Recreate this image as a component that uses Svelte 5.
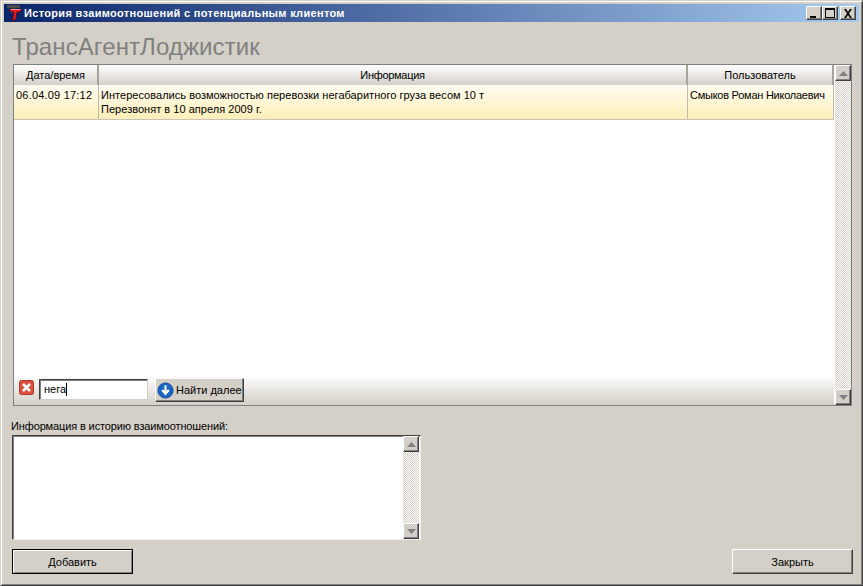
<script lang="ts">
  const columns = [
    { title: 'Дата/время', cls: 'col-date' },
    { title: 'Информация', cls: 'col-info' },
    { title: 'Пользователь', cls: 'col-user' }
  ];
</script>

{#snippet scrollbar()}
  <div class="scrollbar">
    <div class="sb-btn"><svg width="9" height="5" viewBox="0 0 9 5"><path d="M4.5 0 9 5H0z" fill="#808080" /></svg></div>
    <div class="sb-track"></div>
    <div class="sb-btn"><svg width="9" height="5" viewBox="0 0 9 5"><path d="M0 0h9L4.5 5z" fill="#808080" /></svg></div>
  </div>
{/snippet}

<div class="window">
  <div class="titlebar">
    <svg class="app-icon" width="16" height="18" viewBox="0 0 16 18">
      <path d="M0 1h13v3H8L7 9H4l1-5H0z" fill="#4a4a4a" />
      <path d="M3 5h11l-.5 3H10l-1.500 8h-3L7 8H3z" fill="#f01820" stroke="#300" stroke-width="0.500" />
      <path d="M3.500 5.500h10" stroke="#ff9a90" />
    </svg>
    <span class="title-text">История взаимоотношений с потенциальным клиентом</span>
    <div class="caption-btns">
      <div class="cap-btn"><svg width="10" height="10" viewBox="0 0 10 10"><path d="M1 8h6v2H1z" /></svg></div>
      <div class="cap-btn"><svg width="10" height="10" viewBox="0 0 10 10"><path d="M0 0h10v10H0zM1 2v7h8V2z" fill-rule="evenodd" /></svg></div>
      <div class="cap-btn close"><svg width="10" height="9" viewBox="0 0 10 9"><path d="M1 0h2l2 3 2-3h2L6 4.500 9 9H7L5 6 3 9H1l3-4.500z" /></svg></div>
    </div>
  </div>

  <div class="content">
    <div class="logo">ТрансАгентЛоджистик</div>

    <div class="grid-frame">
      <div class="grid-main">
        <div class="grid-head">
          {#each columns as col}
            <div class="head-cell {col.cls}">{col.title}</div>
          {/each}
        </div>
        <div class="grid-row">
          <div class="cell col-date">06.04.09 17:12</div>
          <div class="cell col-info">
            Интересовались возможностью перевозки негабаритного груза весом 10 т<br />
            Перезвонят в 10 апреля 2009 г.
          </div>
          <div class="cell col-user">Смыков Роман Николаевич</div>
        </div>
        <div class="grid-empty"></div>
        <div class="find-panel">
          <svg class="find-close" width="15" height="15" viewBox="0 0 15 15">
            <rect x="0.500" y="0.500" width="14" height="14" rx="2" fill="#dd5040" stroke="#a83828" />
            <path d="M4 4l7 7M11 4l-7 7" stroke="#fff" stroke-width="2.500" />
          </svg>
          <div class="find-input">нега<span class="caret"></span></div>
          <div class="find-btn">
            <svg width="17" height="17" viewBox="0 0 18 18">
              <circle cx="9" cy="9" r="8" fill="#1a66c8" stroke="#0c458f" />
              <path d="M9 3.500v8M5.500 8.500 9 12.500l3.500-4" fill="none" stroke="#fff" stroke-width="2.200" />
            </svg>
            <span>Найти далее</span>
          </div>
        </div>
      </div>
      {@render scrollbar()}
    </div>

    <div class="memo-label">Информация в историю взаимоотношений:</div>
    <div class="memo">
      <div class="memo-body"></div>
      {@render scrollbar()}
    </div>

    <div class="actions">
      <div class="btn default"><span>Добавить</span></div>
      <div class="btn"><span>Закрыть</span></div>
    </div>
  </div>
</div>

<style>
  :global(body) {
    margin: 0;
    background: #d4d0c8;
  }

  .window {
    box-sizing: border-box;
    width: 863px;
    height: 586px;
    padding: 3px;
    display: flex;
    flex-direction: column;
    background: #d4d0c8;
    border: 1px solid;
    border-color: #d4d0c8 #404040 #404040 #d4d0c8;
    box-shadow: inset 1px 1px 0 #fff, inset -1px -1px 0 #808080;
    font-family: 'Liberation Sans', Tahoma, sans-serif;
    font-size: 11px;
    color: #000;
  }

  .titlebar {
    height: 18px;
    flex: none;
    display: flex;
    align-items: center;
    padding: 0 3px;
    background: linear-gradient(90deg, #0a246a, #a6caf0);
    color: #fff;
    font-weight: 700;
  }

  .app-icon {
    flex: none;
    margin-right: 1px;
  }

  .title-text {
    flex: 1;
    white-space: nowrap;
    letter-spacing: 0.32px;
  }

  .caption-btns {
    display: flex;
  }

  .cap-btn {
    box-sizing: border-box;
    width: 16px;
    height: 14px;
    display: flex;
    align-items: center;
    justify-content: center;
    background: #d4d0c8;
    border: 1px solid;
    border-color: #fff #404040 #404040 #fff;
    box-shadow: inset -1px -1px 0 #808080;
  }

  .cap-btn.close {
    margin-left: 2px;
  }

  .content {
    flex: 1;
    display: flex;
    flex-direction: column;
    padding: 0 6px 8px 8px;
    min-height: 0;
  }

  .logo {
    height: 43px;
    padding-top: 11px;
    box-sizing: border-box;
    font-size: 24px;
    line-height: 28px;
    letter-spacing: 0.1px;
    color: #808080;
  }

  .grid-frame {
    box-sizing: border-box;
    height: 342px;
    margin-left: 1px;
    margin-right: 1px;
    flex: none;
    display: flex;
    border: 1px solid #808080;
    background: #fff;
  }

  .grid-main {
    flex: 1;
    min-width: 0;
    display: flex;
    flex-direction: column;
  }

  .grid-head {
    display: flex;
    height: 20px;
    flex: none;
  }

  .head-cell {
    box-sizing: border-box;
    display: flex;
    align-items: center;
    justify-content: center;
    background: linear-gradient(#fff, #d4d0c8);
    border-right: 2px solid #a8a49c;
  }

  .head-cell.col-info {
    letter-spacing: -0.3px;
  }

  .col-date { width: 85px; flex: none; }
  .col-info { width: 589px; flex: none; }
  .col-user { width: 146px; flex: none; }

  .grid-row {
    display: flex;
    height: 35px;
    flex: none;
    background: linear-gradient(#fffdf2, #fdeeb8);
    border-bottom: 1px solid #c8c4b8;
    box-sizing: border-box;
  }

  .cell {
    box-sizing: border-box;
    padding: 3px 2px 0 2px;
    line-height: 14px;
    white-space: nowrap;
    border-right: 1px solid #c0bcb0;
  }

  .cell.col-date {
    letter-spacing: 0.2px;
  }

  .cell.col-info {
    letter-spacing: 0.03px;
  }

  .cell.col-user {
    letter-spacing: -0.25px;
  }

  .grid-empty {
    flex: 1;
  }

  .find-panel {
    height: 30px;
    flex: none;
    box-sizing: border-box;
    padding: 3px 0 0 5px;
    display: flex;
    align-items: flex-start;
    background: linear-gradient(#fff, #d4d0c8);
  }

  .find-close {
    margin-top: 2px;
    margin-right: 5px;
  }

  .find-input {
    box-sizing: border-box;
    width: 109px;
    height: 21px;
    margin-top: 1px;
    padding: 3px 0 0 4px;
    background: #fff;
    border: 1px solid;
    border-color: #404040 #d4d0c8 #d4d0c8 #404040;
    box-shadow: inset 1px 1px 0 #808080;
  }

  .caret {
    display: inline-block;
    width: 1px;
    height: 13px;
    background: #000;
    vertical-align: -3px;
  }

  .find-btn {
    box-sizing: border-box;
    width: 89px;
    height: 24px;
    margin-left: 7px;
    display: flex;
    align-items: center;
    gap: 2px;
    padding-left: 1px;
    background: #d4d0c8;
    border: 1px solid;
    border-color: #fff #404040 #404040 #fff;
    box-shadow: inset -1px -1px 0 #808080;
  }

  .scrollbar {
    width: 16px;
    flex: none;
    margin: 0 0 0 1px;
    display: flex;
    flex-direction: column;
  }

  .sb-btn {
    box-sizing: border-box;
    height: 16px;
    flex: none;
    display: flex;
    align-items: center;
    justify-content: center;
    background: #d4d0c8;
    border: 1px solid;
    border-color: #fff #404040 #404040 #fff;
    box-shadow: inset -1px -1px 0 #808080;
  }

  .sb-track {
    flex: 1;
    background: repeating-conic-gradient(#d4d0c8 0 25%, #fff 0 50%) 0 0 / 2px 2px;
  }

  .memo-label {
    margin-top: 13px;
    height: 16px;
    line-height: 14px;
    margin-left: -1px;
    letter-spacing: -0.13px;
  }

  .memo {
    box-sizing: border-box;
    width: 409px;
    height: 105px;
    flex: none;
    display: flex;
    padding-right: 1px;
    background: #fff;
    border: 1px solid;
    border-color: #404040 #f0eee8 #f0eee8 #404040;
    box-shadow: inset 1px 1px 0 #808080;
  }

  .memo-body {
    flex: 1;
  }

  .actions {
    margin-top: 9px;
    display: flex;
    justify-content: space-between;
  }

  .btn {
    box-sizing: border-box;
    width: 121px;
    height: 25px;
    display: flex;
    align-items: center;
    justify-content: center;
    background: #d4d0c8;
    border: 1px solid;
    border-color: #fff #404040 #404040 #fff;
    box-shadow: inset -1px -1px 0 #808080;
  }

  .btn.default {
    border-color: #000;
    box-shadow: inset 1px 1px 0 #fff, inset -1px -1px 0 #808080;
  }
</style>
